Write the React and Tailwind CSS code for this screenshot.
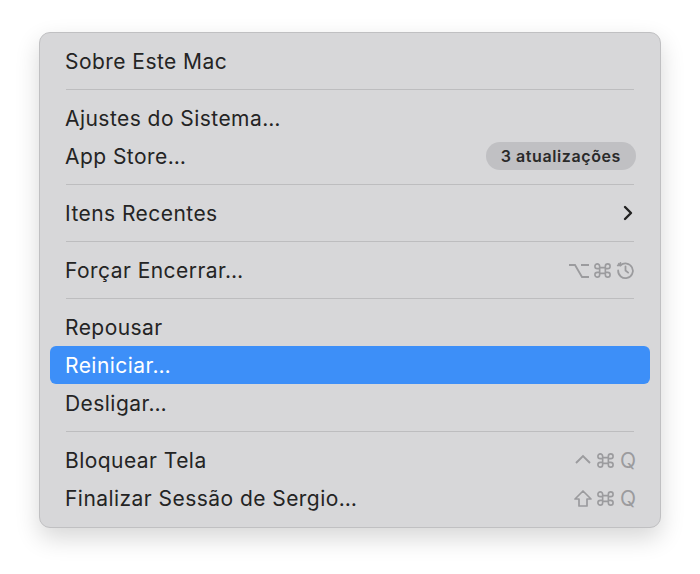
import React from "react";

const Sep = () => (
  <div className="h-[19px] flex items-center px-[26px]">
    <div className="h-px w-full bg-[#bdbdbf]" />
  </div>
);

const Row = ({ label, active, right }) => (
  <div
    className={
      "mx-[10px] h-[38px] rounded-[6px] pl-[15px] pr-4 flex items-center justify-between " +
      (active ? "bg-[#3d8ff8] text-white" : "text-[#242424]")
    }
  >
    <span className="text-[21px] tracking-[0.45px] leading-none pt-[1px]">{label}</span>
    {right}
  </div>
);

const Shortcut = ({ children }) => (
  <span className="text-[21px] leading-none text-[#9b9b9e] flex items-center gap-[3px] mr-[-2px] pt-[1px]">{children}</span>
);

const Cmd = () => (
  <svg width="19" height="19" viewBox="0 0 20 20" fill="none" stroke="#9b9b9e" strokeWidth="1.7">
    <path d="M7 7h6v6H7z M7 7V5.5A2.5 2.5 0 1 0 4.5 8H7 M13 7V5.5A2.5 2.5 0 1 1 15.5 8H13 M7 13v1.5A2.5 2.5 0 1 1 4.5 12H7 M13 13v1.5a2.5 2.5 0 1 0 2.5-2.5H13" />
  </svg>
);

export default function App() {
  return (
    <div
      className="w-[700px] h-[574px] bg-white flex items-start justify-center pt-[32px]"
      style={{ fontFamily: "Inter, 'Noto Sans', sans-serif" }}
    >
      <div className="w-[622px] rounded-[11px] bg-[#d7d7d9] border border-[#c0c0c2] shadow-[0_10px_24px_rgba(0,0,0,0.16)] pt-[9px] pb-[10px]">
        <Row label="Sobre Este Mac" />
        <Sep />
        <Row label="Ajustes do Sistema…" />
        <Row
          label="App Store…"
          right={
            <span className="h-[28px] px-[15px] rounded-full bg-[#c0c0c3] text-[16px] font-semibold text-[#2a2a2a] flex items-center tracking-[0.6px] mr-[-2px]">
              3 atualizações
            </span>
          }
        />
        <Sep />
        <Row
          label="Itens Recentes"
          right={
            <svg width="12" height="16" viewBox="0 0 12 16" fill="none" stroke="#222" strokeWidth="2.4" strokeLinecap="round" strokeLinejoin="round">
              <path d="M3 2l6 6-6 6" />
            </svg>
          }
        />
        <Sep />
        <Row
          label="Forçar Encerrar…"
          right={
            <Shortcut>
              <svg width="22" height="18" viewBox="0 0 22 18" fill="none" stroke="#9b9b9e" strokeWidth="1.8">
                <path d="M1 3h6l7 12h7 M13 3h8" />
              </svg>
              <Cmd />
              <svg width="21" height="21" viewBox="0 0 20 20" fill="none" stroke="#9b9b9e" strokeWidth="1.7" strokeLinecap="round" strokeLinejoin="round">
                <path d="M5.2 5.2A7 7 0 1 1 3 10" />
                <path d="M5.2 5.2L3.6 3.6 M5.2 5.2H2.6 M5.2 5.2v-2.4" />
                <path d="M10 6v4l2.5 2" />
              </svg>
            </Shortcut>
          }
        />
        <Sep />
        <Row label="Repousar" />
        <Row label="Reiniciar…" active />
        <Row label="Desligar…" />
        <Sep />
        <Row
          label="Bloquear Tela"
          right={
            <Shortcut>
              <svg width="20" height="18" viewBox="0 0 20 18" fill="none" stroke="#9b9b9e" strokeWidth="1.9">
                <path d="M3 11l7-7 7 7" />
              </svg>
              <Cmd />
              <span className="ml-[2px]">Q</span>
            </Shortcut>
          }
        />
        <Row
          label="Finalizar Sessão de Sergio…"
          right={
            <Shortcut>
              <svg width="20" height="20" viewBox="0 0 20 20" fill="none" stroke="#9b9b9e" strokeWidth="1.7" strokeLinejoin="round">
                <path d="M10 2l8 8h-4v7H6v-7H2z" />
              </svg>
              <Cmd />
              <span className="ml-[2px]">Q</span>
            </Shortcut>
          }
        />
      </div>
    </div>
  );
}
